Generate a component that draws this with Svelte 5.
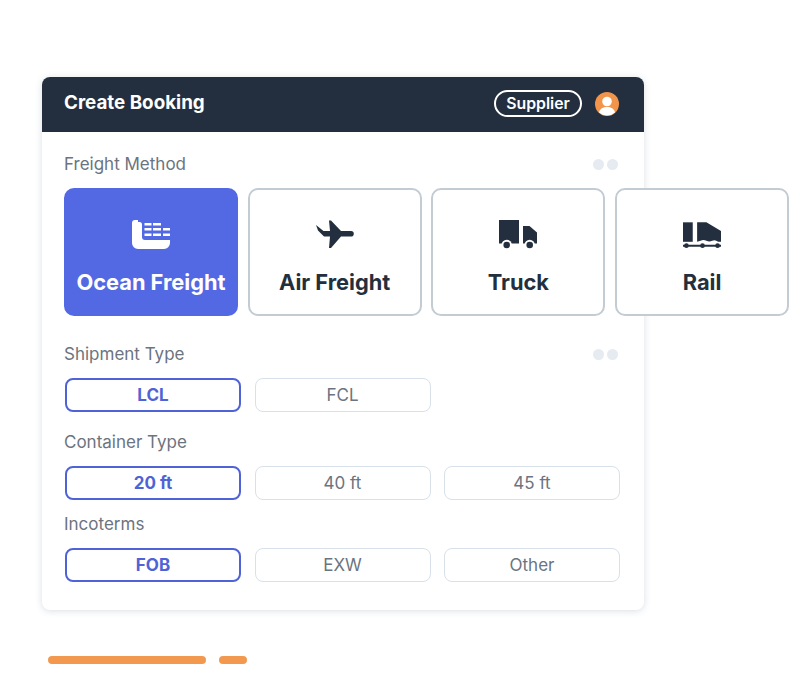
<script>
    const methods = [
        { name: "Ocean Freight", icon: "ship", active: true },
        { name: "Air Freight", icon: "plane" },
        { name: "Truck", icon: "truck" },
        { name: "Rail", icon: "rail" },
    ];

    const groups = [
        { label: "Shipment Type", dots: true, options: ["LCL", "FCL"], cls: "shipment" },
        { label: "Container Type", options: ["20 ft", "40 ft", "45 ft"], cls: "container" },
        { label: "Incoterms", options: ["FOB", "EXW", "Other"], cls: "incoterms" },
    ];
</script>

<div class="page">
    <div class="card">
        <header class="card-head">
            <h1>Create Booking</h1>
            <div class="head-right">
                <span class="role">Supplier</span>
                <svg class="avatar" viewBox="0 0 24 24">
                    <circle cx="12" cy="12" r="12" fill="#f2954b" />
                    <circle cx="12" cy="9.500" r="4.800" fill="#fff" />
                    <path d="M4 20.500c1-4 4-5.500 8-5.500s7 1.500 8 5.500a12 12 0 0 1-16 0z" fill="#fff" />
                </svg>
            </div>
        </header>

        <div class="card-body">
            <div class="label-row">
                <span class="label">Freight Method</span>
                <span class="dots"><i></i><i></i></span>
            </div>
            <div class="methods">
                {#each methods as m}
                    <div class="tile" class:active={m.active}>
                        {#if m.icon === "ship"}
                            <svg class="icon" viewBox="0 0 38 29" fill="#fff">
                                <path d="M3 0h3v2h1.500A2.500 2.500 0 0 1 10 4.500V17a3 3 0 0 0 3 3h25v3a6 6 0 0 1-6 6H6a6 6 0 0 1-6-6V3a3 3 0 0 1 3-3z" />
                                <path d="M12.500 3h7v2.500h-7zM21 3h8v2.500h-8zM12.500 8h7v2.500h-7zM21 8h8v2.500h-8zM31 8h7v2.500h-7zM12.500 13.500h7V16h-7zM21 13.500h8V16h-8zM31 13.500h7V16h-7z" />
                            </svg>
                        {:else if m.icon === "plane"}
                            <svg class="icon" viewBox="0 0 38 29" fill="#232f3e">
                                <path d="M0 5l7.500 6H14L13 0.500h2L25 11h10a2.800 2.800 0 0 1 0 5.600H25L15 28h-2l1-11.400H8L2 10.500z" />
                            </svg>
                        {:else if m.icon === "truck"}
                            <svg class="icon" viewBox="0 0 38 29" fill="#232f3e">
                                <path d="M0 0h20v23.500H0z" />
                                <path d="M24 6h6.500l7.500 6.500v11H24z" />
                                <circle cx="7.700" cy="25" r="5.200" fill="#fff" />
                                <circle cx="7.700" cy="25" r="3.300" />
                                <circle cx="30.700" cy="25" r="5.200" fill="#fff" />
                                <circle cx="30.700" cy="25" r="3.300" />
                            </svg>
                        {:else}
                            <svg class="icon" viewBox="0 0 39 29" fill="#232f3e">
                                <path d="M0 2h10v20H0z" />
                                <path d="M14.500 2h9.500l15 9v11l-3 0q-3-2.500-6-1-3 1.500-6 0-3-1.500-6 0l-3.500 1z" />
                                <path d="M0 25h39v2H0z" />
                                <circle cx="3.500" cy="26" r="2.400" />
                                <circle cx="20" cy="26" r="2.400" />
                                <circle cx="35.500" cy="26" r="2.400" />
                            </svg>
                        {/if}
                        <span class="tile-name">{m.name}</span>
                    </div>
                {/each}
            </div>

            {#each groups as g}
                <div class="group {g.cls}">
                    <div class="label-row">
                        <span class="label">{g.label}</span>
                        {#if g.dots}
                            <span class="dots"><i></i><i></i></span>
                        {/if}
                    </div>
                    <div class="options">
                        {#each g.options as opt, i}
                            <button class="opt" class:selected={i === 0}>{opt}</button>
                        {/each}
                    </div>
                </div>
            {/each}
        </div>
    </div>

    <div class="bars">
        <span class="bar long"></span>
        <span class="bar short"></span>
    </div>
</div>

<style>
    :global(body) {
        background: #fff;
        font-family: "Inter", "Liberation Sans", sans-serif;
    }

    .page {
        width: 800px;
        height: 692px;
        padding: 77px 0 0 42px;
        box-sizing: border-box;
        overflow: hidden;
    }

    .card {
        width: 602px;
        height: 533px;
        background: #fff;
        border-radius: 8px;
        box-shadow: 0 1px 7px rgba(70, 90, 120, 0.2);
    }

    .card-head {
        height: 55px;
        display: flex;
        align-items: center;
        justify-content: space-between;
        padding: 0 25px 2px 22px;
        box-sizing: border-box;
        background: #232f3e;
        border-radius: 8px 8px 0 0;
    }

    h1 {
        margin: 0 0 3px;
        font-size: 18.800px;
        font-weight: 700;
        color: #fff;
    }

    .head-right {
        display: flex;
        align-items: center;
        gap: 13px;
    }

    .role {
        width: 88px;
        height: 27px;
        box-sizing: border-box;
        display: flex;
        align-items: center;
        justify-content: center;
        border: 2px solid #fff;
        border-radius: 14px;
        color: #fff;
        font-size: 15.800px;
        font-weight: 600;
    }

    .avatar {
        width: 24px;
        height: 24px;
    }

    .card-body {
        padding: 20px 26px 0 22px;
    }

    .label-row {
        height: 24px;
        display: flex;
        align-items: center;
        justify-content: space-between;
        margin-bottom: 12px;
    }

    .label {
        font-size: 17px;
        color: #6b7480;
    }

    .dots {
        display: flex;
        gap: 3px;
    }

    .dots i {
        width: 11px;
        height: 11px;
        border-radius: 50%;
        background: #e6ebf1;
    }

    .methods {
        display: grid;
        grid-template-columns: repeat(4, 174px);
        column-gap: 9.700px;
        width: 724px;
    }

    .tile {
        height: 128px;
        box-sizing: border-box;
        display: flex;
        flex-direction: column;
        align-items: center;
        border: 2px solid #c3cbd3;
        border-radius: 10px;
        background: #fff;
        padding-top: 30px;
        color: #232f3e;
    }

    .tile.active {
        background: #5369e4;
        border-color: #5369e4;
        color: #fff;
    }

    .icon {
        width: 38px;
        height: 29px;
    }

    .tile-name {
        margin-top: 20px;
        font-size: 21.800px;
        font-weight: 700;
        line-height: 26px;
    }

    .shipment {
        margin-top: 26px;
    }

    .container {
        margin-top: 18px;
    }

    .incoterms {
        margin-top: 12px;
    }

    .options {
        display: grid;
        grid-template-columns: repeat(3, 176px);
        column-gap: 13.500px;
        margin-left: 1px;
    }

    .opt {
        height: 34px;
        padding: 0;
        box-sizing: border-box;
        border: 1.500px solid #d8e1ea;
        border-radius: 8px;
        background: #fff;
        font-family: inherit;
        font-size: 17px;
        color: #6b7480;
    }

    .opt.selected {
        border: 2px solid #4f63d6;
        color: #4f63d6;
        font-weight: 700;
    }

    .bars {
        display: flex;
        gap: 13px;
        margin: 46px 0 0 6px;
    }

    .bar {
        height: 8px;
        border-radius: 4px;
        background: #f2994f;
    }

    .long {
        width: 158px;
    }

    .short {
        width: 28px;
    }
</style>
